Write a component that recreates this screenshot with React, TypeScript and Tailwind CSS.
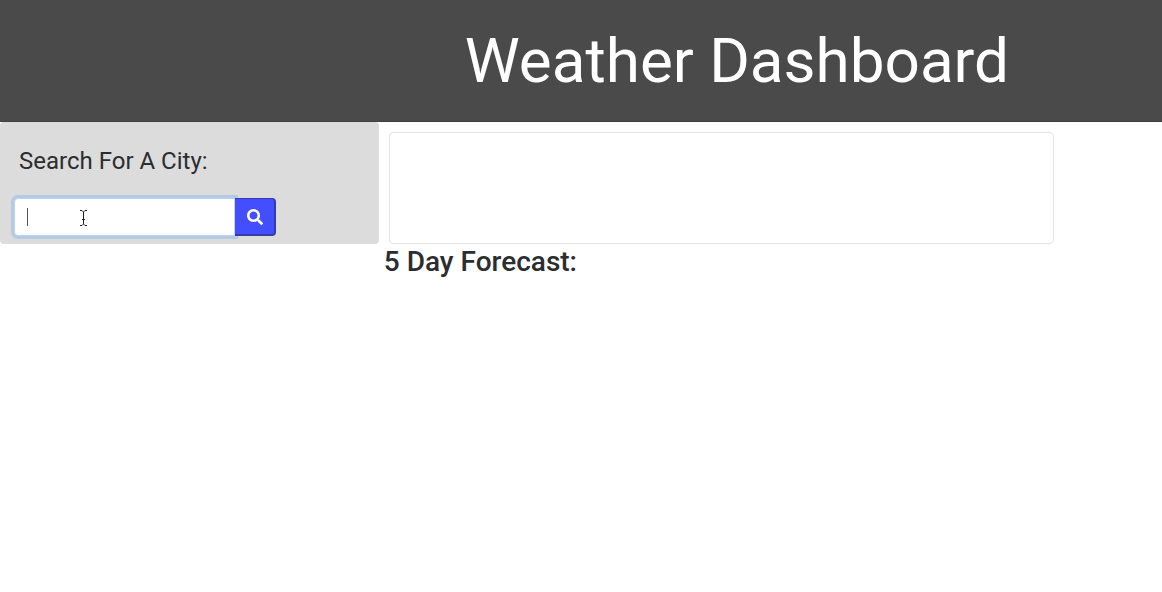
export default function App() {
  return (
    <div className="min-h-screen bg-white font-['Roboto','Liberation_Sans',sans-serif] text-[#2b2d2f]">
      <header className="border-b border-[#3f3f3f] bg-[#4a4a4a] pt-[21px] pb-5 pl-[40%]">
        <h1 className="text-[62px] leading-[80px] font-normal whitespace-nowrap text-white">Weather Dashboard</h1>
      </header>
      <div className="flex items-start">
        <aside className="w-[32.6%] shrink-0 rounded-[4px] bg-[#dcdcdc] pt-6 pb-2 pl-[14px]">
          <form onSubmit={(e) => e.preventDefault()}>
            <label htmlFor="city" className="block pl-[5px] text-2xl leading-[30px]">
              Search For A City:
            </label>
            <div className="mt-[22px] flex h-[38px]">
              <div className="relative">
                <input
                  id="city"
                  type="text"
                  className="block h-full w-[221px] rounded-l-[4px] border border-[#b9d5f3] bg-white px-3 text-base caret-transparent ring-3 ring-[#b5cae4] outline-none"
                />
                <span className="pointer-events-none absolute top-[10px] left-[13px] h-[18px] w-px bg-[#555555]" />
                <svg
                  className="pointer-events-none absolute top-3 left-[66px]"
                  width="7"
                  height="16"
                  viewBox="0 0 7 16"
                  fill="none"
                  stroke="#222222"
                  aria-hidden="true"
                >
                  <path d="M0 .5h2L3.5 2 5 .5h2M3.5 2v12M0 15.5h2L3.5 14 5 15.5h2M2 9.5h3" />
                </svg>
              </div>
              <button
                type="submit"
                aria-label="Search"
                className="relative flex w-[41px] items-center justify-center rounded-r-[4px] border-t border-r-2 border-b-2 border-[#393aa9] bg-[#434eff] text-white"
              >
                <svg width="16" height="16" viewBox="0 0 512 512" fill="currentColor" aria-hidden="true">
                  <path d="M505 442.7L405.3 343c-4.5-4.5-10.6-7-17-7H372c27.6-35.3 44-79.7 44-128C416 93.1 322.9 0 208 0S0 93.1 0 208s93.1 208 208 208c48.3 0 92.7-16.4 128-44v16.3c0 6.4 2.5 12.5 7 17l99.7 99.7c9.4 9.4 24.6 9.4 33.9 0l28.3-28.3c9.4-9.4 9.4-24.6.1-34zM208 336c-70.7 0-128-57.2-128-128 0-70.7 57.2-128 128-128 70.7 0 128 57.2 128 128 0 70.7-57.2 128-128 128z" />
                </svg>
              </button>
            </div>
          </form>
        </aside>
        <main className="min-w-0 flex-1">
          <section aria-label="Current weather" className="mt-[10px] mr-[13.8%] ml-[10px] h-28 rounded-[4px] border border-[#e5e5e5]" />
          <h2 className="pl-[5px] text-[28px] leading-9 font-medium">5 Day Forecast:</h2>
        </main>
      </div>
    </div>
  );
}
